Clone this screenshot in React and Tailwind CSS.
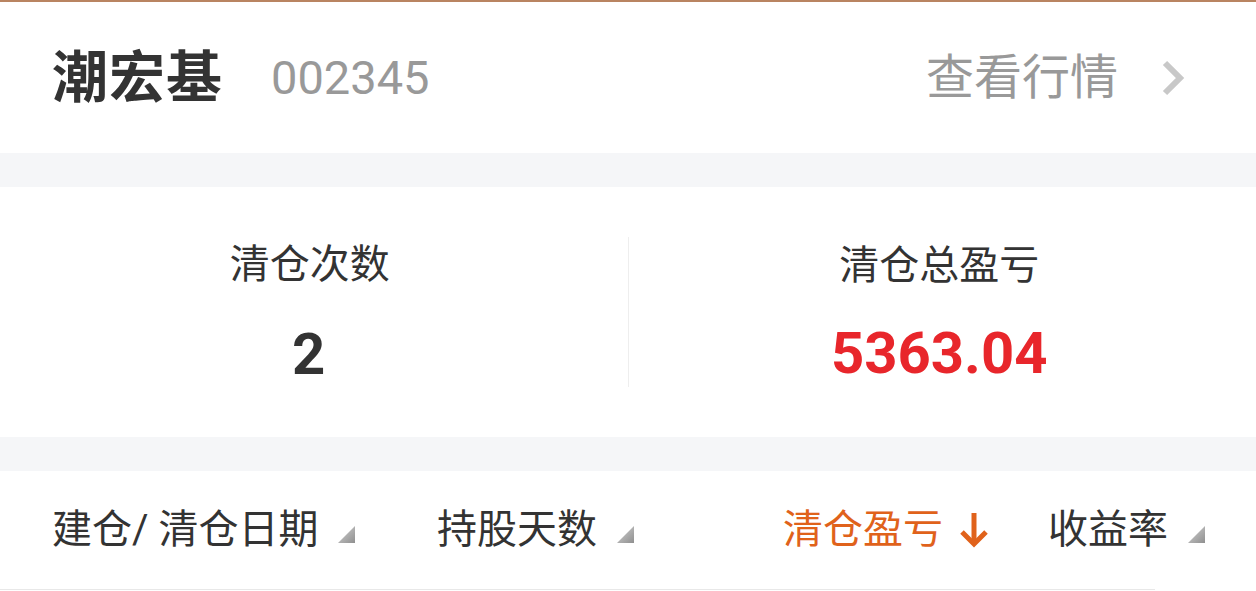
import React from 'react';

const SortTriangle = () => (
  <svg width="17" height="17" viewBox="0 0 17 17" className="shrink-0">
    <defs>
      <linearGradient id="tri" x1="0" y1="0" x2="1" y2="1">
        <stop offset="0%" stopColor="#d4d4d4" />
        <stop offset="100%" stopColor="#8f8f8f" />
      </linearGradient>
    </defs>
    <polygon points="0,17 17,17 17,0" fill="url(#tri)" />
  </svg>
);

const HeaderCell = ({ label, className, children }) => (
  <div className={`flex items-center shrink-0 ${className}`}>
    <span className="whitespace-nowrap">{label}</span>
    {children}
  </div>
);

const App = () => {
  return (
    <div
      className="w-[1256px] min-h-[591px] bg-white text-[#333]"
      style={{ fontFamily: 'Roboto, "Noto Sans CJK SC", sans-serif' }}
    >
      {/* top accent line */}
      <div className="h-[2px] bg-[#b98461]" />

      {/* Stock header */}
      <div className="h-[151px] flex items-center justify-between pl-[52px] pr-[70px]">
        <div className="flex items-center">
          <span className="text-[56px] font-bold leading-none tracking-[1px]">潮宏基</span>
          <span className="ml-[48px] text-[47px] leading-none text-[#999]">002345</span>
        </div>
        <div className="flex items-center">
          <span className="text-[48px] leading-none text-[#999]">查看行情</span>
          <svg width="26" height="40" viewBox="0 0 26 40" className="ml-[42px]">
            <polyline points="5,5 20,20 5,35" fill="none" stroke="#c8c8c8" strokeWidth="6" />
          </svg>
        </div>
      </div>

      <div className="h-[34px] bg-[#f5f6f8]" />

      {/* Summary stats */}
      <div className="h-[250px] flex items-center">
        <div className="flex-1 flex flex-col items-center">
          <span className="text-[40px] leading-none mt-[4px] -ml-[8px]">清仓次数</span>
          <span className="mt-[40px] text-[58px] font-bold leading-none -ml-[10px]">2</span>
        </div>
        <div className="w-px h-[150px] bg-[#eeeeee]" />
        <div className="flex-1 flex flex-col items-center">
          <span className="text-[40px] leading-none mt-[4px] -ml-[6px]">清仓总盈亏</span>
          <span className="mt-[38px] text-[58px] font-bold leading-none text-[#e8262b] -ml-[6px]">5363.04</span>
        </div>
      </div>

      <div className="h-[34px] bg-[#f5f6f8]" />

      {/* Table header */}
      <div className="h-[118px] flex items-center pl-[52px] text-[40px] leading-none">
        <HeaderCell label="建仓/ 清仓日期" className="w-[385px]">
          <span className="ml-[20px] mt-[8px]"><SortTriangle /></span>
        </HeaderCell>
        <HeaderCell label="持股天数" className="w-[346px]">
          <span className="ml-[20px] mt-[8px]"><SortTriangle /></span>
        </HeaderCell>
        <HeaderCell label="清仓盈亏" className="w-[265px] text-[#e0621b]">
          <svg width="32" height="38" viewBox="0 0 32 38" className="ml-[15px]">
            <line x1="16" y1="2" x2="16" y2="33" stroke="#e0621b" strokeWidth="5" />
            <polyline points="4,21 16,33 28,21" fill="none" stroke="#e0621b" strokeWidth="5" />
          </svg>
        </HeaderCell>
        <HeaderCell label="收益率">
          <span className="ml-[20px] mt-[8px]"><SortTriangle /></span>
        </HeaderCell>
      </div>
      <div className="w-[1155px] h-px bg-[#e8e8e8]" />
    </div>
  );
};

export default App;
